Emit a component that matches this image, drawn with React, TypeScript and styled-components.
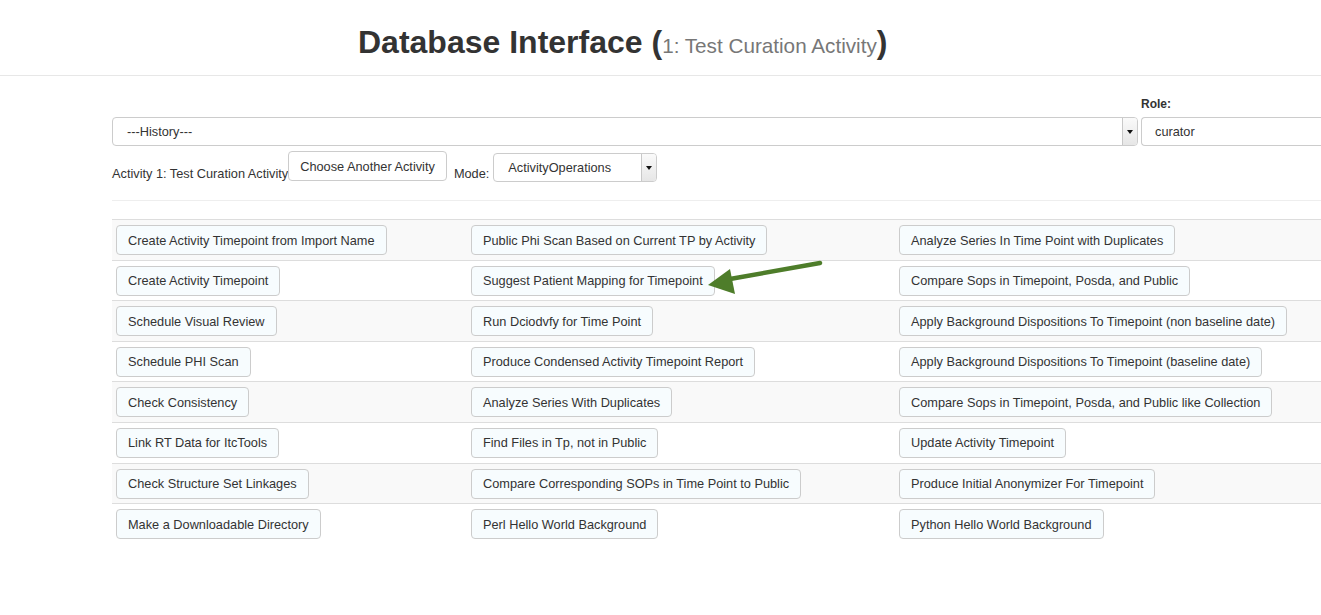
import React from 'react';
import styled, { createGlobalStyle } from 'styled-components';

const GlobalStyle = createGlobalStyle`
  html, body {
    margin: 0;
    padding: 0;
    overflow: hidden;
    background: #fff;
  }
  body {
    font-family: 'Liberation Sans', Arial, Helvetica, sans-serif;
    font-size: 12.75px;
    color: #333;
  }
`;

const Page = styled.div`
  position: relative;
  width: 1321px;
  min-height: 615px;
`;

const Header = styled.header`
  height: 76px;
  border-bottom: 1px solid #e7e7e7;
  display: flex;
  align-items: center;
  padding-left: 358px;
  box-sizing: border-box;
`;

const Title = styled.h1`
  margin: 0;
  padding-top: 10px;
  font-size: 32px;
  font-weight: 700;
  color: #333;
  white-space: nowrap;
`;

const Sub = styled.small`
  font-size: 20.7px;
  font-weight: 400;
  color: #777;
`;

const Main = styled.div`
  margin-left: 112px;
  width: 1260px;
`;

const TopRow = styled.div`
  display: flex;
  align-items: flex-end;
  gap: 3px;
  margin-top: 21px;
`;

const RoleCol = styled.div`
  display: flex;
  flex-direction: column;
  width: 230px;
`;

const Label = styled.label`
  font-weight: 700;
  font-size: 12px;
  margin-bottom: 6px;
`;

const SelectBox = styled.div<{ $w: number }>`
  width: ${p => p.$w}px;
  height: 29px;
  box-sizing: border-box;
  display: flex;
  align-items: stretch;
  border: 1px solid #ccc;
  border-radius: 4px;
  background: #fff;
  overflow: hidden;
`;

const SelectText = styled.span`
  flex: 1;
  display: flex;
  align-items: center;
  padding-left: 14px;
  font-size: 12.75px;
  color: #333;
`;

const Caret = styled.span`
  width: 14px;
  border-left: 1px solid #c8c8c8;
  background: linear-gradient(#fafafa, #e6e6e6);
  display: flex;
  align-items: center;
  justify-content: center;
  &::after {
    content: '';
    border-left: 3px solid transparent;
    border-right: 3px solid transparent;
    border-top: 4px solid #111;
  }
`;

const RoleInput = styled.div`
  height: 29px;
  box-sizing: border-box;
  border: 1px solid #ccc;
  border-right: none;
  border-radius: 4px 0 0 4px;
  display: flex;
  align-items: center;
  padding-left: 13px;
  font-size: 12.75px;
`;

const ActivityRow = styled.div`
  display: flex;
  align-items: flex-end;
  margin-top: 6px;
  white-space: nowrap;
`;

const Plain = styled.span<{ $ml?: number; $mr?: number }>`
  margin-left: ${p => p.$ml || 0}px;
  margin-right: ${p => p.$mr || 0}px;
  padding-bottom: 1px;
  font-size: 12.75px;
`;

const Button = styled.button`
  height: 30px;
  box-sizing: border-box;
  padding: 0 11px;
  border: 1px solid #ccc;
  border-radius: 4px;
  background: #f7fcfe;
  font-family: 'Liberation Sans', Arial, Helvetica, sans-serif;
  font-size: 12.75px;
  color: #333;
  white-space: nowrap;
  cursor: pointer;
`;

const TopButton = styled(Button)`
  background: #fff;
  position: relative;
  top: -1px;
  margin-right: 2px;
`;

const Rule = styled.hr`
  border: none;
  border-top: 1px solid #eee;
  margin: 18px 0 18px;
`;

const Table = styled.table`
  border-collapse: collapse;
  width: 1260px;
  table-layout: fixed;
`;

const Row = styled.tr<{ $odd: boolean }>`
  background: ${p => (p.$odd ? '#f9f9f9' : '#fff')};
  border-top: 1px solid #ddd;
`;

const Cell = styled.td<{ $w?: number }>`
  padding: 5px 4px 4.6px;
  width: ${p => (p.$w ? `${p.$w}px` : 'auto')};
  vertical-align: middle;
`;

const Arrow = styled.svg`
  position: absolute;
  left: 700px;
  top: 255px;
  pointer-events: none;
`;

const rows: [string, string, string][] = [
  ['Create Activity Timepoint from Import Name', 'Public Phi Scan Based on Current TP by Activity', 'Analyze Series In Time Point with Duplicates'],
  ['Create Activity Timepoint', 'Suggest Patient Mapping for Timepoint', 'Compare Sops in Timepoint, Posda, and Public'],
  ['Schedule Visual Review', 'Run Dciodvfy for Time Point', 'Apply Background Dispositions To Timepoint (non baseline date)'],
  ['Schedule PHI Scan', 'Produce Condensed Activity Timepoint Report', 'Apply Background Dispositions To Timepoint (baseline date)'],
  ['Check Consistency', 'Analyze Series With Duplicates', 'Compare Sops in Timepoint, Posda, and Public like Collection'],
  ['Link RT Data for ItcTools', 'Find Files in Tp, not in Public', 'Update Activity Timepoint'],
  ['Check Structure Set Linkages', 'Compare Corresponding SOPs in Time Point to Public', 'Produce Initial Anonymizer For Timepoint'],
  ['Make a Downloadable Directory', 'Perl Hello World Background', 'Python Hello World Background'],
];

export default function App() {
  return (
    <Page>
      <GlobalStyle />
      <Header>
        <Title>
          Database Interface (<Sub>1: Test Curation Activity</Sub>)
        </Title>
      </Header>
      <Main>
        <TopRow>
          <SelectBox $w={1026}>
            <SelectText>---History---</SelectText>
            <Caret />
          </SelectBox>
          <RoleCol>
            <Label>Role:</Label>
            <RoleInput>curator</RoleInput>
          </RoleCol>
        </TopRow>
        <ActivityRow>
          <Plain>Activity 1: Test Curation Activity</Plain>
          <TopButton>Choose Another Activity</TopButton>
          <Plain $ml={5} $mr={4}>Mode:</Plain>
          <SelectBox $w={164}>
            <SelectText>ActivityOperations</SelectText>
            <Caret />
          </SelectBox>
        </ActivityRow>
        <Rule />
        <Table>
          <tbody>
            {rows.map((r, i) => (
              <Row key={i} $odd={i % 2 === 0}>
                <Cell $w={347}><Button>{r[0]}</Button></Cell>
                <Cell $w={420}><Button>{r[1]}</Button></Cell>
                <Cell><Button>{r[2]}</Button></Cell>
              </Row>
            ))}
          </tbody>
        </Table>
      </Main>
      <Arrow width="130" height="45" viewBox="0 0 130 45">
        <line x1="120" y1="8" x2="30" y2="24" stroke="#4e7d2a" strokeWidth="4.5" strokeLinecap="round" />
        <polygon points="8,30 30,14 35,39" fill="#4e7d2a" />
      </Arrow>
    </Page>
  );
}
